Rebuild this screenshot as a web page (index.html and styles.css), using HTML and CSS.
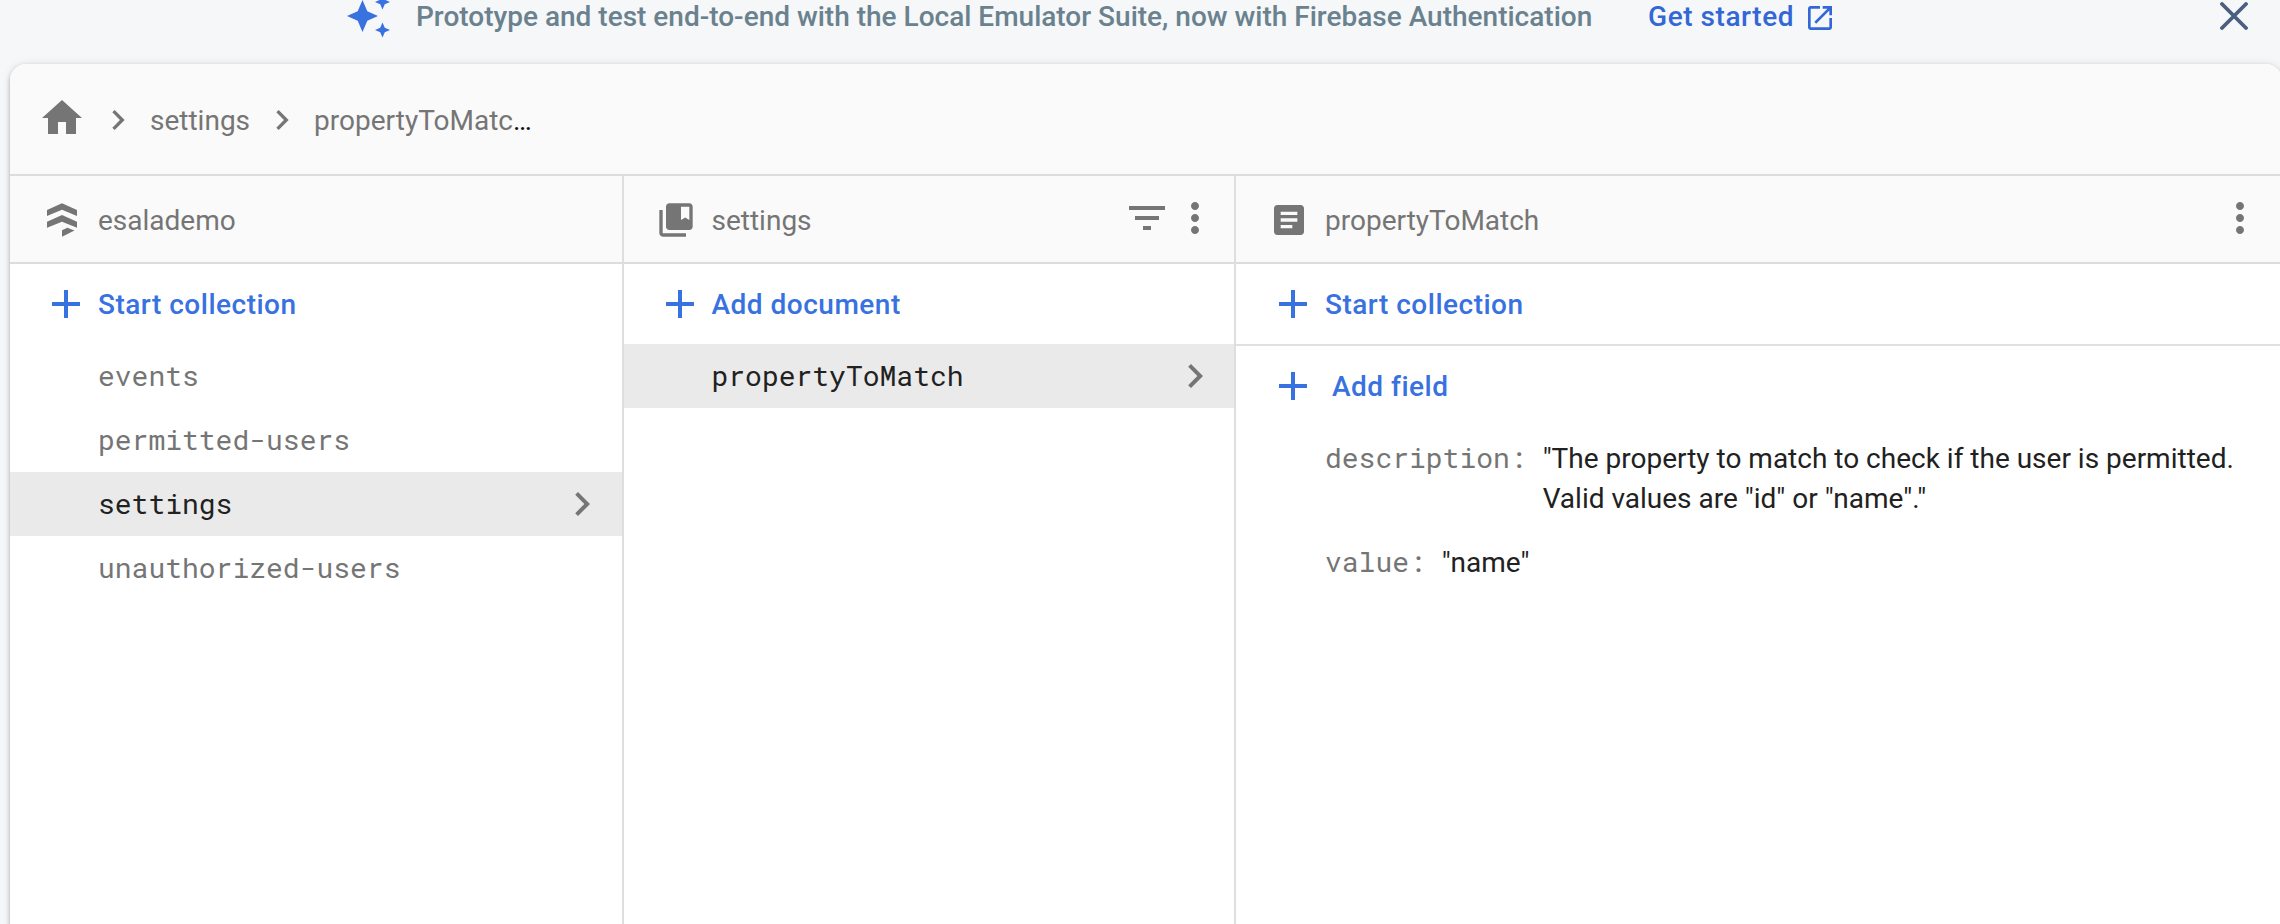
FILE: index.html
```html
<!DOCTYPE html>
<html lang="en">
<head>
<meta charset="utf-8">
<title>Firestore data</title>
<link rel="stylesheet" href="styles.css">
</head>
<body>
<svg class="defs" aria-hidden="true">
  <symbol id="chevron" viewBox="0 0 24 24"><path d="M10 6 8.59 7.41 13.17 12l-4.58 4.59L10 18l6-6z"/></symbol>
  <symbol id="plus" viewBox="0 0 28 28"><path d="M12 0h4v12h12v4H16v12h-4V16H0v-4h12z"/></symbol>
  <symbol id="dots" viewBox="0 0 24 24"><path d="M12 8c1.1 0 2-.9 2-2s-.9-2-2-2-2 .9-2 2 .9 2 2 2zm0 2c-1.1 0-2 .9-2 2s.9 2 2 2 2-.9 2-2-.9-2-2-2zm0 6c-1.1 0-2 .9-2 2s.9 2 2 2 2-.9 2-2-.9-2-2-2z"/></symbol>
</svg>

<header class="banner">
  <svg class="spark" viewBox="0 0 48 40"><path d="M18.500 0l4.800 11.200 10.700 4.800-10.700 4.800-4.800 11.200-4.800-11.200L3 16l10.700-4.800zM38.500 22.500l2.300 5.200L46 30l-5.200 2.300-2.300 5.200-2.300-5.200L31 30l5.200-2.300zM38.500-5.500l2.300 5.200L46 2l-5.200 2.300-2.300 5.200-2.300-5.200L31 2l5.200-2.300z"/></svg>
  <span class="banner-text">Prototype and test end-to-end with the Local Emulator Suite, now with Firebase Authentication</span>
  <a class="banner-link">Get started
    <svg class="open-icon" viewBox="0 0 24 24"><path d="M19 19H5V5h7V3H5c-1.110 0-2 .9-2 2v14c0 1.100.89 2 2 2h14c1.100 0 2-.9 2-2v-7h-2v7zM14 3v2h3.590l-9.830 9.830 1.410 1.410L19 6.410V10h2V3h-7z"/></svg>
  </a>
  <svg class="close" viewBox="0 0 28 28"><path d="M2 2l24 24M26 2l-24 24"/></svg>
</header>

<main class="card">
  <nav class="crumbs">
    <svg class="icon-48 home" viewBox="0 0 24 24"><path d="M10 20v-6h4v6h5v-8h3L12 3 2 12h3v8z"/></svg>
    <svg class="icon-40"><use href="#chevron"/></svg>
    <span class="crumb">settings</span>
    <svg class="icon-40"><use href="#chevron"/></svg>
    <span class="crumb">propertyToMatc<span class="ellipsis">…</span></span>
  </nav>
  <div class="panels">
    <section class="panel">
      <div class="panel-head">
        <svg class="icon-40" viewBox="0 0 24 24"><path d="M12 2l9 4v3.600l-9-3.800-9 3.800V6zM12 9l9 4v3.700L12 13l-9 3.700V13zM12 18.200l3.200-1.500 4.300 1.600L12 22z"/></svg>
        <span class="title">esalademo</span>
      </div>
      <div class="action"><svg class="plus"><use href="#plus"/></svg><span>Start collection</span></div>
      <ul class="list">
        <li class="item">events</li>
        <li class="item">permitted-users</li>
        <li class="item selected">settings<svg class="icon-48"><use href="#chevron"/></svg></li>
        <li class="item">unauthorized-users</li>
      </ul>
    </section>
    <section class="panel documents">
      <div class="panel-head">
        <svg class="icon-40" viewBox="0 0 24 24"><path d="M4 6H2v14c0 1.100.9 2 2 2h14v-2H4V6z"/><path d="M20 2H8c-1.100 0-2 .9-2 2v12c0 1.100.9 2 2 2h12c1.100 0 2-.9 2-2V4c0-1.100-.9-2-2-2zm0 10l-2.500-1.500L15 12V4h5v8z"/></svg>
        <span class="title">settings</span>
        <svg class="icon-48 tool" viewBox="0 0 24 24"><path d="M10 18h4v-2h-4v2zM3 6v2h18V6H3zm3 7h12v-2H6v2z"/></svg>
        <svg class="icon-48 tool"><use href="#dots"/></svg>
      </div>
      <div class="action"><svg class="plus"><use href="#plus"/></svg><span>Add document</span></div>
      <ul class="list">
        <li class="item selected">propertyToMatch<svg class="icon-48"><use href="#chevron"/></svg></li>
      </ul>
    </section>
    <section class="panel">
      <div class="panel-head">
        <svg class="icon-40" viewBox="0 0 24 24"><path d="M19 3H5c-1.100 0-2 .9-2 2v14c0 1.100.9 2 2 2h14c1.100 0 2-.9 2-2V5c0-1.100-.9-2-2-2zm-5 14H7v-2h7v2zm3-4H7v-2h10v2zm0-4H7V7h10v2z"/></svg>
        <span class="title">propertyToMatch</span>
        <svg class="icon-48 tool"><use href="#dots"/></svg>
      </div>
      <div class="action divided"><svg class="plus"><use href="#plus"/></svg><span>Start collection</span></div>
      <div class="action field-action"><svg class="plus"><use href="#plus"/></svg><span>Add field</span></div>
      <dl class="fields">
        <div class="field"><dt>description:</dt><dd>"The property to match to check if the user is permitted. Valid values are "id" or "name"."</dd></div>
        <div class="field"><dt>value:</dt><dd>"name"</dd></div>
      </dl>
    </section>
  </div>
</main>
</body>
</html>
```
FILE: styles.css
```css
* { box-sizing: border-box; }

body {
  margin: 0;
  height: 924px;
  overflow: hidden;
  background: #f5f7f9;
  font: 400 28px/40px Roboto, sans-serif;
  color: #212121;
}

svg { display: block; flex: none; fill: currentColor; }
.defs { position: absolute; width: 0; height: 0; }
.icon-40 { width: 40px; height: 40px; margin-top: 2px; }
.icon-48 { width: 48px; height: 48px; }

.banner {
  display: flex;
  height: 64px;
  padding: 0 32px 0 344px;
  font-weight: 500;
  color: #6a818e;
  line-height: 34px;
  white-space: nowrap;
}
.spark { width: 48px; height: 40px; color: #3871e0; }
.banner-text { margin-left: 24px; width: 1176px; }
.banner-link { display: flex; gap: 10px; margin-left: 56px; color: #3367d6; letter-spacing: .56px; }
.open-icon { width: 32px; height: 32px; margin-top: 2px; }
.close {
  width: 28px;
  height: 28px;
  margin: 2px 0 0 auto;
  fill: none;
  stroke: #4a5f80;
  stroke-width: 3.8;
  stroke-linecap: round;
}

.card {
  width: 2272px;
  height: 900px;
  margin-left: 10px;
  border-radius: 16px;
  background: #fff;
  box-shadow: 0 2px 4px rgba(0, 0, 0, .28), 0 0 10px rgba(0, 0, 0, .08);
  overflow: hidden;
}

.crumbs {
  display: flex;
  align-items: center;
  height: 112px;
  padding-left: 28px;
  border-bottom: 2px solid #dcdcdc;
  background: #fafafa;
  color: #757575;
}
.home { margin: 0 12px 2px 0; }
.crumb { margin: 3px 12px 0; }
.ellipsis { color: #111; }

.panels { display: grid; grid-template-columns: 614px 612px 1fr; height: 788px; }
.panel { min-width: 0; border-right: 2px solid #dedede; }
.panel:last-child { border-right: 0; padding-left: 1px; }

.panel-head {
  display: flex;
  align-items: center;
  height: 88px;
  padding: 0 15px 0 32px;
  border-bottom: 2px solid #dcdcdc;
  background: #fafafa;
  color: #757575;
}
.panel:last-child .panel-head { margin-left: -1px; padding: 0 18px 0 33px; }
.title { margin: 4px auto 0 16px; }
.tool { margin-bottom: 2px; }

.action {
  display: flex;
  align-items: center;
  height: 80px;
  padding-left: 42px;
  font-weight: 500;
  letter-spacing: .5px;
  color: #3871e0;
}
.action span { margin: 2px 0 0 18px; }
.plus { width: 28px; height: 28px; }
.divided { height: 82px; margin-left: -1px; padding-left: 43px; border-bottom: 2px solid #e0e0e0; }
.field-action span { margin-left: 25px; }

.list { margin: 0; padding: 0; list-style: none; }
.item, .field dt {
  font-family: "Roboto Mono", "DejaVu Sans Mono", monospace;
  font-size: 28px;
  color: #757575;
}
.item {
  display: flex;
  align-items: center;
  justify-content: space-between;
  height: 64px;
  padding: 0 16px 0 88px;
}
.selected { background: #eaeaea; color: #212121; }
.selected svg { color: #757575; }

.documents .panel-head { padding-left: 31.500px; }
.documents .action { padding-left: 41.500px; }
.documents .item { padding: 0 15px 0 87.500px; }

.fields { margin: 0; padding: 12px 40px 0 88px; }
.field { display: flex; margin-bottom: 24px; }
.field dt { flex: none; margin-right: 16px; }
.field dd { margin: 0; padding-top: 1px; }
.field:first-child dd { margin-bottom: -1px; }
```
